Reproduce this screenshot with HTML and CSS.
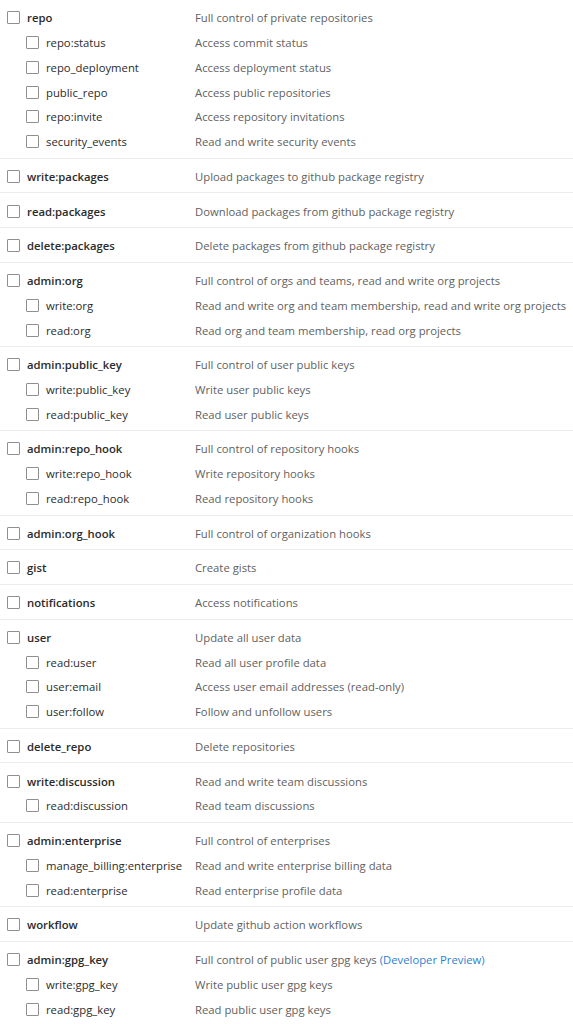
FILE: index.html
```html
<!DOCTYPE html>
<html lang="en">
<head>
<meta charset="utf-8">
<title>Scopes</title>
<link rel="stylesheet" href="styles.css">
</head>
<body>
<div class="scopes">
  <div class="group">
    <div class="row top"><label class="name"><input type="checkbox" class="cb">repo</label><span class="desc">Full control of private repositories</span></div>
    <div class="row sub"><label class="name"><input type="checkbox" class="cb">repo:status</label><span class="desc">Access commit status</span></div>
    <div class="row sub"><label class="name"><input type="checkbox" class="cb">repo_deployment</label><span class="desc">Access deployment status</span></div>
    <div class="row sub"><label class="name"><input type="checkbox" class="cb">public_repo</label><span class="desc">Access public repositories</span></div>
    <div class="row sub"><label class="name"><input type="checkbox" class="cb">repo:invite</label><span class="desc">Access repository invitations</span></div>
    <div class="row sub"><label class="name"><input type="checkbox" class="cb">security_events</label><span class="desc">Read and write security events</span></div>
  </div>
  <div class="group">
    <div class="row top"><label class="name"><input type="checkbox" class="cb">write:packages</label><span class="desc">Upload packages to github package registry</span></div>
  </div>
  <div class="group">
    <div class="row top"><label class="name"><input type="checkbox" class="cb">read:packages</label><span class="desc">Download packages from github package registry</span></div>
  </div>
  <div class="group">
    <div class="row top"><label class="name"><input type="checkbox" class="cb">delete:packages</label><span class="desc">Delete packages from github package registry</span></div>
  </div>
  <div class="group">
    <div class="row top"><label class="name"><input type="checkbox" class="cb">admin:org</label><span class="desc">Full control of orgs and teams, read and write org projects</span></div>
    <div class="row sub"><label class="name"><input type="checkbox" class="cb">write:org</label><span class="desc">Read and write org and team membership, read and write org projects</span></div>
    <div class="row sub"><label class="name"><input type="checkbox" class="cb">read:org</label><span class="desc">Read org and team membership, read org projects</span></div>
  </div>
  <div class="group">
    <div class="row top"><label class="name"><input type="checkbox" class="cb">admin:public_key</label><span class="desc">Full control of user public keys</span></div>
    <div class="row sub"><label class="name"><input type="checkbox" class="cb">write:public_key</label><span class="desc">Write user public keys</span></div>
    <div class="row sub"><label class="name"><input type="checkbox" class="cb">read:public_key</label><span class="desc">Read user public keys</span></div>
  </div>
  <div class="group">
    <div class="row top"><label class="name"><input type="checkbox" class="cb">admin:repo_hook</label><span class="desc">Full control of repository hooks</span></div>
    <div class="row sub"><label class="name"><input type="checkbox" class="cb">write:repo_hook</label><span class="desc">Write repository hooks</span></div>
    <div class="row sub"><label class="name"><input type="checkbox" class="cb">read:repo_hook</label><span class="desc">Read repository hooks</span></div>
  </div>
  <div class="group">
    <div class="row top"><label class="name"><input type="checkbox" class="cb">admin:org_hook</label><span class="desc">Full control of organization hooks</span></div>
  </div>
  <div class="group">
    <div class="row top"><label class="name"><input type="checkbox" class="cb">gist</label><span class="desc">Create gists</span></div>
  </div>
  <div class="group">
    <div class="row top"><label class="name"><input type="checkbox" class="cb">notifications</label><span class="desc">Access notifications</span></div>
  </div>
  <div class="group">
    <div class="row top"><label class="name"><input type="checkbox" class="cb">user</label><span class="desc">Update all user data</span></div>
    <div class="row sub"><label class="name"><input type="checkbox" class="cb">read:user</label><span class="desc">Read all user profile data</span></div>
    <div class="row sub"><label class="name"><input type="checkbox" class="cb">user:email</label><span class="desc">Access user email addresses (read-only)</span></div>
    <div class="row sub"><label class="name"><input type="checkbox" class="cb">user:follow</label><span class="desc">Follow and unfollow users</span></div>
  </div>
  <div class="group">
    <div class="row top"><label class="name"><input type="checkbox" class="cb">delete_repo</label><span class="desc">Delete repositories</span></div>
  </div>
  <div class="group">
    <div class="row top"><label class="name"><input type="checkbox" class="cb">write:discussion</label><span class="desc">Read and write team discussions</span></div>
    <div class="row sub"><label class="name"><input type="checkbox" class="cb">read:discussion</label><span class="desc">Read team discussions</span></div>
  </div>
  <div class="group">
    <div class="row top"><label class="name"><input type="checkbox" class="cb">admin:enterprise</label><span class="desc">Full control of enterprises</span></div>
    <div class="row sub"><label class="name"><input type="checkbox" class="cb">manage_billing:enterprise</label><span class="desc">Read and write enterprise billing data</span></div>
    <div class="row sub"><label class="name"><input type="checkbox" class="cb">read:enterprise</label><span class="desc">Read enterprise profile data</span></div>
  </div>
  <div class="group">
    <div class="row top"><label class="name"><input type="checkbox" class="cb">workflow</label><span class="desc">Update github action workflows</span></div>
  </div>
  <div class="group">
    <div class="row top"><label class="name"><input type="checkbox" class="cb">admin:gpg_key</label><span class="desc">Full control of public user gpg keys <a class="preview" href="#">(Developer Preview)</a></span></div>
    <div class="row sub"><label class="name"><input type="checkbox" class="cb">write:gpg_key</label><span class="desc">Write public user gpg keys</span></div>
    <div class="row sub"><label class="name"><input type="checkbox" class="cb">read:gpg_key</label><span class="desc">Read public user gpg keys</span></div>
  </div>
</div>
</body>
</html>
```

FILE: styles.css
```css
html, body {
  margin: 0;
  padding: 0;
  background: #ffffff;
}

body {
  font-family: "Open Sans", "Noto Sans", "Liberation Sans", sans-serif;
  font-size: 11.3px;
  color: #24292e;
  -webkit-font-smoothing: antialiased;
}

.scopes {
  display: flex;
  flex-direction: column;
}

.group {
  padding: 5.3px 0 3.6px;
  border-bottom: 1px solid #ececec;
}

.row {
  display: grid;
  grid-template-columns: 195px 1fr;
  align-items: center;
  height: 24.8px;
  white-space: nowrap;
}

.name {
  display: flex;
  align-items: center;
  gap: 7px;
  color: #2b2b2b;
}

.row.top .name {
  padding-left: 7px;
  font-weight: 600;
}

.row.sub .name {
  padding-left: 26px;
  font-weight: 400;
}

.cb {
  -webkit-appearance: none;
  appearance: none;
  margin: 0;
  width: 13px;
  height: 13px;
  border: 1px solid #8f8f8f;
  border-radius: 1px;
  background: #fff;
  flex: none;
}

.desc {
  color: #5f5f5f;
}

.preview {
  color: #2f7fd0;
  text-decoration: none;
}
```
